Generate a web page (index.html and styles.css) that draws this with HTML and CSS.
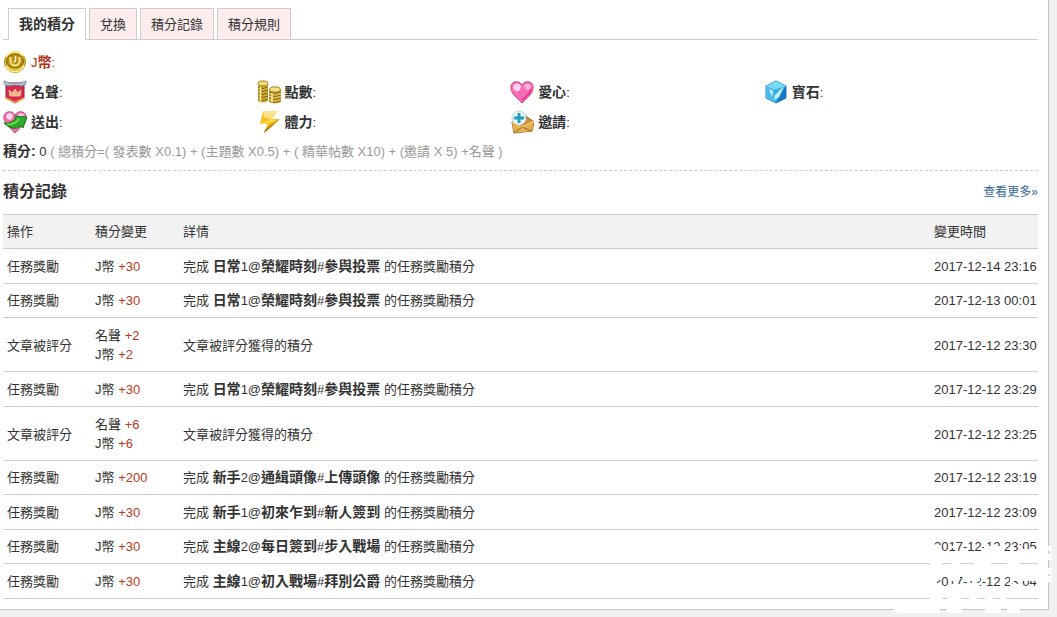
FILE: index.html
```html
<!DOCTYPE html>
<html lang="zh-Hant">
<head>
<meta charset="utf-8">
<title>我的積分</title>
<link rel="stylesheet" href="styles.css">
</head>
<body>
<main class="panel">
  <nav class="tabs">
    <a class="tab tab-active" href="#">我的積分</a>
    <a class="tab" href="#">兌換</a>
    <a class="tab" href="#">積分記錄</a>
    <a class="tab" href="#">積分規則</a>
  </nav>

  <ul class="credits">
    <li class="credit credit-main">
      <svg class="icon" viewBox="0 0 24 24"><circle cx="12" cy="12" r="10.5" fill="#e3c332" stroke="#a98a12"/><path d="M3 7a10 10 0 0 1 17-1M3 16a10 10 0 0 0 18 0" fill="none" stroke="#fff3a0" stroke-width="1.5"/><ellipse cx="12" cy="11" rx="8.500" ry="7" fill="#b98d1a" stroke="#80600c"/><path d="M7.500 7v4a4.500 4.500 0 0 0 9 0V7" fill="none" stroke="#f6e27a" stroke-width="2.200"/><path d="M12.500 6v4q0 2-2 2" fill="none" stroke="#fff6b5" stroke-width="1.500"/></svg>
      <span><span class="latin">J</span>幣<i class="colon">:</i></span>
    </li>
    <li class="credit">
      <svg class="icon" viewBox="0 0 24 24"><path d="M3 3h18v15l-9 5-9-5z" fill="#d9284d" stroke="#9c1a38"/><path d="M3 18l9 4.500 9-4.500" fill="none" stroke="#e8a13a" stroke-width="1.500"/><path d="M1 1q3 0 4 2h14q1-2 4-2v3l-4 2q-7-2-14 0L1 4z" fill="#a9c4d3" stroke="#6d8793" stroke-width=".7"/><path d="M7 16l-1-6 3.500 3L12 9l2.500 4L18 10l-1 6z" fill="#f3b184" stroke="#fbd9a6" stroke-width=".8"/></svg>
      <span>名聲<i class="colon">:</i></span>
    </li>
    <li class="credit">
      <svg class="icon" viewBox="0 0 24 24"><path d="M1 4v17q5 3 10 0V4z" fill="#d1ab35"/><path d="M1 7q5 3 10 0M1 10q5 3 10 0M1 13q5 3 10 0M1 16q5 3 10 0M1 19q5 3 10 0" fill="none" stroke="#7d611a"/><ellipse cx="6" cy="3.500" rx="5" ry="2.500" fill="#f2dd76" stroke="#9b7b1f"/><path d="M12 9v13q6 3 12 0V9z" fill="#dcb94a"/><path d="M12 12q6 3 12 0M12 15q6 3 12 0M12 18q6 3 12 0M12 21q6 3 12 0" fill="none" stroke="#80631c"/><ellipse cx="18" cy="9.500" rx="5.500" ry="2.700" fill="#f5e385" stroke="#9b7b1f"/><path d="M3.500 7v14M15 13v9" stroke="#fff0a0" stroke-width="1.500"/></svg>
      <span>點數<i class="colon">:</i></span>
    </li>
    <li class="credit">
      <svg class="icon" viewBox="0 0 24 24"><path d="M12 23C6 17 0 13 1 6c1-5 8-6 11-1 3-5 10-4 11 1 1 7-5 11-11 17z" fill="#f96db4" stroke="#d0408a"/><path d="M3 8c0-5 6-6 8-2 0 5-5 8-8 2z" fill="#ffd3e9"/><path d="M14 6c3-4 7-2 7 1-2 4-5 4-7-1z" fill="#ffb3d8"/><path d="M12 20q7-5 9-11" fill="none" stroke="#e83a93" stroke-width="2"/></svg>
      <span>愛心<i class="colon">:</i></span>
    </li>
    <li class="credit">
      <svg class="icon" viewBox="0 0 24 24"><path d="M12 1l10 5v12l-10 5-10-5V6z" fill="#36a9e6" stroke="#227bb8"/><path d="M2 6l8 4 12-4L12 1z" fill="#75d8f6"/><path d="M2 6l8 4 2 13-10-5z" fill="#4bb9ea"/><path d="M22 6L12 23l10-5z" fill="#1875c2"/><path d="M5 9l4 2-1 6zM11 15l9-9-5 11-5 3z" fill="#c5f3ff"/></svg>
      <span>寶石<i class="colon">:</i></span>
    </li>
    <li class="credit">
      <svg class="icon" viewBox="0 0 24 24"><path d="M12 23C6 17 0 12 1 6c1-5 8-6 11-1 3-5 10-4 11 1 1 7-5 11-11 17z" fill="#f56aae" stroke="#bd4d85"/><path d="M3 7c0-5 6-5 7-2 0 5-4 7-7 2zM14 6c3-4 6-3 7-1-1 3-4 4-7 1z" fill="#ffd6e9"/><path d="M1 13q8 1 12-5l-1-2 12 1-4 11-2-2q-8 6-17-3z" fill="#2cab2c" stroke="#147718"/><path d="M4 14q8 1 12-5" fill="none" stroke="#77df55" stroke-width="1.500"/></svg>
      <span>送出<i class="colon">:</i></span>
    </li>
    <li class="credit">
      <svg class="icon" viewBox="0 0 24 24"><path d="M6 1h15l-6 8h8L7 23l4-9H3z" fill="#f9bd24"/><path d="M6 1h15l-6 8-8-2z" fill="#fce48e"/><path d="M11 14l12-5L7 23z" fill="#f0ab1c"/><path d="M3 14l11-5 5 1-8 4z" fill="#ffdf47"/><path d="M23 9L7 23l1-3z" fill="#a96d16"/></svg>
      <span>體力<i class="colon">:</i></span>
    </li>
    <li class="credit">
      <svg class="icon" viewBox="0 0 24 24"><path d="M2 12L14 5l10 7-2 9-18 2z" fill="#cf8e2e" stroke="#8d5a17"/><circle cx="9" cy="8" r="7" fill="#e9f8fc" stroke="#b5d3dc"/><path d="M9 3v10M4 8h10" stroke="#289cc0" stroke-width="3"/><path d="M2 12l10 5 12-6-2 10-18 2z" fill="#e6b054"/><path d="M4 23l8-6 10 4" fill="none" stroke="#9b651d"/><path d="M2 12l10 5 12-6" fill="none" stroke="#f9d98c"/></svg>
      <span>邀請<i class="colon">:</i></span>
    </li>
  </ul>

  <p class="total"><b>積分:</b> 0 <span class="formula">( 總積分=( 發表數 X0.1) + (主題數 X0.5) + ( 精華帖數 X10) + (邀請 X 5) +名聲 )</span></p>

  <header class="log-head">
    <h2 class="log-title">積分記錄</h2>
    <a class="more" href="#">查看更多»</a>
  </header>

  <table class="log">
    <thead>
      <tr><th class="col-op">操作</th><th class="col-change">積分變更</th><th>詳情</th><th class="col-time">變更時間</th></tr>
    </thead>
    <tbody>
      <tr><td>任務獎勵</td><td>J幣 <span class="plus">+30</span></td><td>完成 <b>日常<span class="latin">1@</span>榮耀時刻<span class="latin">#</span>參與投票</b> 的任務獎勵積分</td><td>2017-12-14 23:16</td></tr>
      <tr><td>任務獎勵</td><td>J幣 <span class="plus">+30</span></td><td>完成 <b>日常<span class="latin">1@</span>榮耀時刻<span class="latin">#</span>參與投票</b> 的任務獎勵積分</td><td>2017-12-13 00:01</td></tr>
      <tr><td>文章被評分</td><td>名聲 <span class="plus">+2</span><br>J幣 <span class="plus">+2</span></td><td>文章被評分獲得的積分</td><td>2017-12-12 23:30</td></tr>
      <tr class="roomy"><td>任務獎勵</td><td>J幣 <span class="plus">+30</span></td><td>完成 <b>日常<span class="latin">1@</span>榮耀時刻<span class="latin">#</span>參與投票</b> 的任務獎勵積分</td><td>2017-12-12 23:29</td></tr>
      <tr><td>文章被評分</td><td>名聲 <span class="plus">+6</span><br>J幣 <span class="plus">+6</span></td><td>文章被評分獲得的積分</td><td>2017-12-12 23:25</td></tr>
      <tr><td>任務獎勵</td><td>J幣 <span class="plus">+200</span></td><td>完成 <b>新手<span class="latin">2@</span>通緝頭像<span class="latin">#</span>上傳頭像</b> 的任務獎勵積分</td><td>2017-12-12 23:19</td></tr>
      <tr><td>任務獎勵</td><td>J幣 <span class="plus">+30</span></td><td>完成 <b>新手<span class="latin">1@</span>初來乍到<span class="latin">#</span>新人簽到</b> 的任務獎勵積分</td><td>2017-12-12 23:09</td></tr>
      <tr><td>任務獎勵</td><td>J幣 <span class="plus">+30</span></td><td>完成 <b>主線<span class="latin">2@</span>每日簽到<span class="latin">#</span>步入戰場</b> 的任務獎勵積分</td><td>2017-12-12 23:05</td></tr>
      <tr><td>任務獎勵</td><td>J幣 <span class="plus">+30</span></td><td>完成 <b>主線<span class="latin">1@</span>初入戰場<span class="latin">#</span>拜別公爵</b> 的任務獎勵積分</td><td>2017-12-12 23:04</td></tr>
    </tbody>
  </table>

  <svg class="stamp" viewBox="0 0 170 81" fill="#fff" aria-hidden="true">
    <path d="M158 10h7v5h-7zM158 18h7v6h-7zM158 32h7v6h-7zM158 40h7v6h-7z"/>
    <path d="M43 26h12v3H43zM64 26h9v3h-9zM87 26h17v3H87zM120 26h13v3h-13z"/>
    <path d="M43 61h12v4H43zM60 61h14v4H60zM82 61h8v4h-8zM98 61h8v4h-8zM113 61h6v4h-6z"/>
    <path d="M7 70h46v7H12q-4 0-5-4zM60 70h15v7H60zM98 70h16v7H98zM120 70h13v7h-13z"/>
    <path d="M45 9h9v7h-9zM63 10h6v2h-6zM97 10h16v6H97zM123 11h4v5h-4zM133 13h18v4h-18z"/>
    <path d="M45 38h9v6h-9zM45 47h9v5h-9zM62 38h6v7h-6zM62 48h13v4H62zM69 38h4v5h-4zM81 38h12v7H81zM81 47h12v5H81zM123 38h11v7h-11zM123 48h11v4h-11zM134 38h17v7h-17z"/>
  </svg>
</main>
</body>
</html>
```

FILE: styles.css
```css
body {
  margin: 0;
  padding-bottom: 7px;
  background: #f0f0f0;
  color: #333;
  font: 13px/19px "Liberation Sans", "Noto Sans CJK TC", sans-serif;
}

.panel {
  position: relative;
  margin-right: 8px;
  padding: 8px 10px 10px 3px;
  background: #fff;
  border-right: 1px solid #c4c4c4;
  border-bottom: 1px solid #c4c4c4;
}

.tabs {
  display: flex;
  gap: 3px;
  padding-left: 5px;
  border-bottom: 1px solid #cdcdcd;
}

.tab {
  padding: 1px 10px 0;
  border: 1px solid #cdcdcd;
  border-bottom: 0;
  background: #fdecec;
  color: #333;
  line-height: 29px;
  text-decoration: none;
}

.tab-active {
  margin-bottom: -1px;
  background: #fff;
  font-size: 14px;
  font-weight: bold;
}

.credits {
  display: grid;
  grid-template-columns: repeat(4, 24.5%);
  grid-auto-rows: 30px;
  margin: 7px 0 0;
  padding: 0;
  list-style: none;
}

.credit {
  display: flex;
  align-items: center;
  gap: 4px;
  font-size: 14px;
  font-weight: bold;
}

.credit-main {
  grid-column: 1 / -1;
  color: #b03010;
}

.icon {
  width: 24px;
  height: 24px;
}

.latin,
.colon {
  font-size: 13px;
  font-style: normal;
  font-weight: normal;
}

.total {
  margin: 0;
  padding: 5px 0 9px;
  border-bottom: 1px dashed #cdcdcd;
}

.total b {
  font-size: 14px;
}

.formula {
  color: #999;
}

.log-head {
  display: flex;
  justify-content: space-between;
  align-items: center;
  padding: 10px 0 11px;
}

.log-title {
  margin: 0;
  font-size: 16px;
  line-height: 22px;
}

.more {
  color: #369;
  font-size: 12px;
  text-decoration: none;
}

.log {
  width: 100%;
  border-collapse: separate;
  border-spacing: 0;
  border-top: 1px solid #cdcdcd;
  table-layout: fixed;
}

.log th,
.log td {
  padding: 7px 4px;
  border-bottom: 1px solid #cdcdcd;
  font-weight: normal;
  text-align: left;
}

.log th {
  background: #f2f2f2;
}

.log tbody tr:nth-child(odd) td,
.log .roomy td {
  padding-top: 8px;
}

.log b {
  font-size: 14px;
}

.log .col-op,
.log .col-change {
  width: 80px;
}

.log .col-time {
  width: 100px;
}

.log td:last-child {
  white-space: nowrap;
}

.plus {
  color: #b83a20;
}

.stamp {
  position: absolute;
  right: -9px;
  bottom: -8px;
  width: 170px;
  height: 81px;
}
```
